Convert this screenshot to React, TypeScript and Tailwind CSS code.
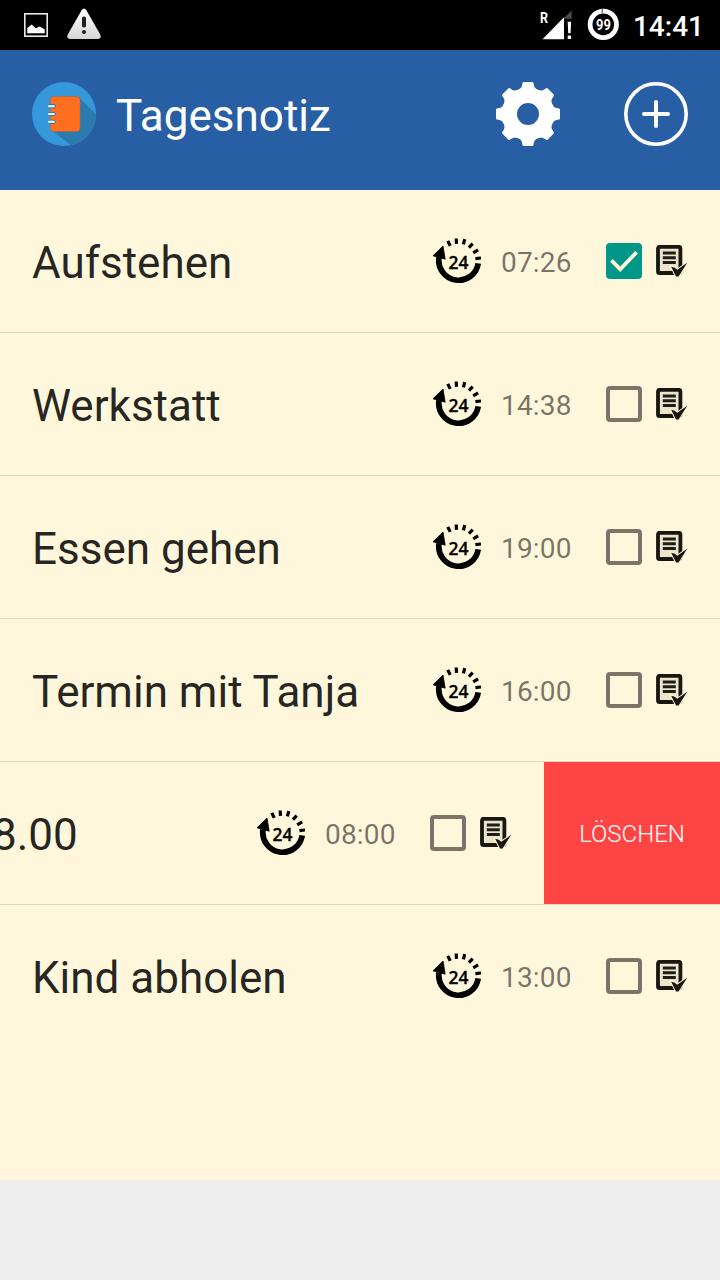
type Task = {
  title: string
  time: string
  done?: boolean
  swiped?: boolean
}

const tasks: Task[] = [
  { title: "Aufstehen", time: "07:26", done: true },
  { title: "Werkstatt", time: "14:38" },
  { title: "Essen gehen", time: "19:00" },
  { title: "Termin mit Tanja", time: "16:00" },
  { title: "8.00", time: "08:00", swiped: true },
  { title: "Kind abholen", time: "13:00" },
]

function StatusBar() {
  return (
    <div className="flex h-[50px] items-center bg-black text-white">
      <svg className="ml-6 h-6 w-6" viewBox="0 0 24 24">
        <rect x="0.8" y="0.8" width="22.4" height="22.4" fill="none" stroke="#e8e8e4" strokeWidth="1.6" />
        <path d="M3.3 20.3v-5.3l4.4-3.4 4 3.6 4.2-1.6 4.8 3v3.7z" fill="#fff" />
      </svg>
      <svg className="mb-[2px] ml-[19px] h-8 w-[34px]" viewBox="0 0 34 32">
        <defs>
          <linearGradient id="warn" x1="0" y1="0" x2="0" y2="1">
            <stop offset="0" stopColor="#fff" />
            <stop offset="1" stopColor="#d6d6d6" />
          </linearGradient>
        </defs>
        <path d="M14.6 2.2q2.4-3.6 4.8 0l13.7 24q2 4.5-2.4 4.8H3.3q-4.4-.3-2.4-4.8z" fill="url(#warn)" />
        <path d="M15 9.5q2-1.8 4 0v9q-2 1.8-4 0z" fill="#222" />
        <circle cx="17" cy="24" r="2.1" fill="#222" />
      </svg>
      <svg className="ml-auto h-[50px] w-[34px]" viewBox="0 0 34 50">
        <text x="1" y="23.4" fontSize="15.5" fontWeight="700" fontFamily="Roboto, sans-serif" fill="#fff" textLength="8" lengthAdjust="spacingAndGlyphs">
          R
        </text>
        <path d="M3.5 39.2L25 17.2v22z" fill="#fff" />
        <path d="M25 18.7V18l7.6-7.4v8.1z" fill="#4a4a4a" />
        <path d="M28.7 21.8h3.4l-.5 11.4h-2.4zM28.7 35.4h3.3v3.6h-3.3z" fill="#fff" />
      </svg>
      <svg className="ml-[14px] h-[50px] w-8" viewBox="0 0 32 50">
        <circle cx="16.3" cy="24.4" r="13.2" fill="none" stroke="#fff" strokeWidth="4.8" />
        <path d="M15.3 8.8v4.6" stroke="#777" strokeWidth="1.4" />
        <text x="9" y="30" fontSize="15.5" fontWeight="700" fontFamily="Roboto, sans-serif" fill="#fff" textLength="14.8" lengthAdjust="spacingAndGlyphs">
          99
        </text>
      </svg>
      <span className="mr-4 ml-[14px] pt-1 text-[28px] leading-8 font-medium">14:41</span>
    </div>
  )
}

function LogoIcon() {
  return (
    <svg className="h-16 w-16" viewBox="0 0 64 64">
      <circle cx="32" cy="32" r="32" fill="#3498db" />
      <path d="M47 15.5L64 32A32 32 0 0 1 39 63.2L20.5 49z" fill="#2c7bae" />
      <rect x="18.3" y="14.2" width="29.9" height="35.6" rx="4" fill="#c8632e" />
      <rect x="18.7" y="15" width="29" height="34" rx="3.6" fill="#ff6f1f" />
      {[24.2, 32, 39.8].map(y => (
        <g key={y}>
          <rect x="16" y={y - 2.1} width="7.8" height="4.2" rx="2.1" fill="#2d7fb8" />
          <rect x="16" y={y - 1} width="6.8" height="2" rx="1" fill="#fff" />
        </g>
      ))}
    </svg>
  )
}

function GearIcon() {
  return (
    <svg className="h-16 w-16" viewBox="-32 -32 64 64" fill="#fff">
      <circle r="18.5" fill="none" stroke="#fff" strokeWidth="15" />
      {[0, 45, 90, 135, 180, 225, 270, 315].map(angle => (
        <path
          key={angle}
          transform={`rotate(${angle})`}
          d="M-4.4 -32H4.4Q5.3 -32 5.5 -31C6 -27.5 6.5 -25.6 10 -24.3L6 -18H-6L-10 -24.3C-6.5 -25.6 -6 -27.5 -5.5 -31Q-5.3 -32 -4.4 -32Z"
        />
      ))}
    </svg>
  )
}

function PlusIcon() {
  return (
    <svg className="h-16 w-16" viewBox="0 0 64 64" fill="none" stroke="#fff" strokeLinecap="round">
      <circle cx="32" cy="32" r="30.2" strokeWidth="3.6" />
      <path d="M32 20v24M20 32h24" strokeWidth="4" />
    </svg>
  )
}

function ClockIcon() {
  return (
    <svg className="h-12 w-12 shrink-0" viewBox="0 0 48 48">
      <path d="M6 20.4A19.8 19.8 0 1 0 45.2 26.4" fill="none" stroke="#000" strokeWidth="5.7" />
      <path d="M10 9L0 18.8L12.2 22.2z" fill="#000" stroke="#000" strokeWidth="0.8" strokeLinejoin="round" />
      <path
        d="M14.8 3.9l2.4 5M23.2 1.5l.3 5.4M31.7 2.2l-1.3 5.2M39.7 6.6l-3.8 4M45.1 12.9l-4.9 2.9M48 21l-5.6.6"
        stroke="#000"
        strokeWidth="3.2"
      />
      <text x="25.5" y="32.4" textAnchor="middle" fontSize="17.4" fontWeight="600" fontFamily="Open Sans, sans-serif" stroke="#000" strokeWidth="0.3">
        24
      </text>
    </svg>
  )
}

function NoteIcon() {
  return (
    <svg className="h-8 w-8 shrink-0" viewBox="0 0 32 32">
      <rect x="2" y="1.8" width="22.4" height="26.2" rx="1.6" fill="#ece4cb" stroke="#17160f" strokeWidth="3.8" />
      <path d="M6.8 8h13M6.8 12.8h13M6.8 17.6h13" stroke="#1f1d18" strokeWidth="3" />
      <path
        d="M15.2 21.8l3.6 1 2.4 2 10-7-8.6 13.6h-2.6z"
        fill="#17160f"
        stroke="#fff7dc"
        strokeWidth="2"
        paintOrder="stroke"
      />
    </svg>
  )
}

function Checkbox({ checked }: { checked?: boolean }) {
  if (checked) {
    return (
      <svg className="h-9 w-9 shrink-0" viewBox="0 0 36 36">
        <rect width="36" height="36" rx="4" fill="#009688" />
        <path d="M5.4 17.4l8.8 8.8L30.6 9.2" fill="none" stroke="#fff7dc" strokeWidth="3.8" />
      </svg>
    )
  }
  return <div className="h-9 w-9 shrink-0 rounded border-4 border-[#7c7565]" />
}

function TaskRow({ task }: { task: Task }) {
  return (
    <li className="flex h-[143px] border-b border-[#ddd7bf] last:h-[142px] last:border-b-0">
      <div className={task.swiped ? "flex w-[544px] items-center overflow-hidden pr-8" : "flex w-full items-center px-8"}>
        <span
          className={
            task.swiped
              ? "-ml-[8px] flex-1 pt-1 text-[44px] text-black/87"
              : "flex-1 pt-1 text-[44px] whitespace-nowrap text-black/87"
          }
        >
          {task.title}
        </span>
        <ClockIcon />
        <span className="ml-5 w-[71px] pt-[3px] text-[28px] tracking-[0.2px] text-black/54">{task.time}</span>
        <div className="mr-[14px] ml-[34px]">
          <Checkbox checked={task.done} />
        </div>
        <NoteIcon />
      </div>
      {task.swiped && (
        <button className="w-[176px] bg-[#ff4444] pt-[2px] text-2xl font-light text-white">LÖSCHEN</button>
      )}
    </li>
  )
}

export default function App() {
  return (
    <div className="flex h-[1280px] w-[720px] flex-col overflow-hidden bg-[#eeeeee] font-[Roboto,sans-serif]">
      <StatusBar />
      <header className="flex h-[140px] items-start bg-[#285fa4] px-8 pt-8">
        <LogoIcon />
        <h1 className="ml-5 pt-[2px] text-[44px] leading-16 text-white">Tagesnotiz</h1>
        <div className="ml-auto flex gap-16">
          <GearIcon />
          <PlusIcon />
        </div>
      </header>
      <ul className="h-[990px] bg-[#fff7dc]">
        {tasks.map(task => (
          <TaskRow key={task.time} task={task} />
        ))}
      </ul>
    </div>
  )
}
